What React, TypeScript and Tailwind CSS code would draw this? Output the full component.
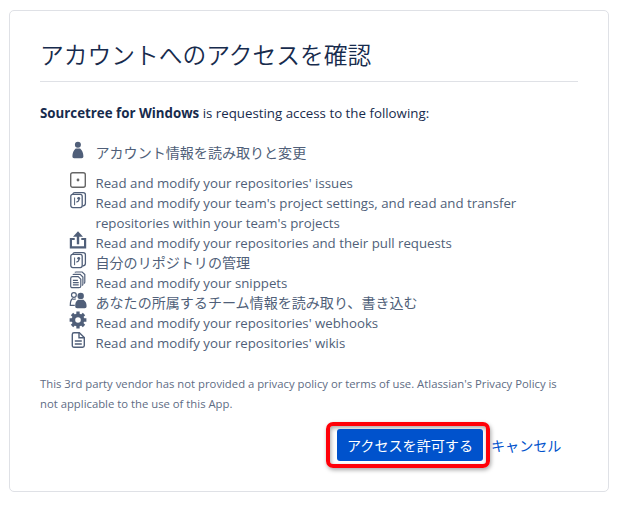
import { ReactNode } from "react";

const ICON = "block h-[18px] w-[18px] shrink-0 overflow-visible";

function UserIcon() {
  return (
    <svg className={ICON} viewBox="0 0 18 18" fill="#505f79">
      <circle cx="8.9" cy="3.7" r="3" />
      <path d="M6.7 7.5h4.4c2 1.7 3.300 4.500 3.300 7.800 0 1.300-.6 2-1.800 2H5.200c-1.200 0-1.800-.7-1.800-2 0-3.300 1.300-6.100 3.300-7.800z" />
    </svg>
  );
}

function IssueIcon() {
  return (
    <svg className={ICON} viewBox="0 0 18 18" fill="none" stroke="#666" strokeWidth="1.4">
      <rect x="1.7" y="1.7" width="14.6" height="14.6" rx="2" />
      <circle cx="9" cy="9" r="1.4" fill="#666" stroke="none" />
    </svg>
  );
}

function RepoIcon() {
  return (
    <svg className={ICON} viewBox="0 0 18 18" fill="none" stroke="#505f79" strokeWidth="1.3">
      <rect x="1.8" y="3.3" width="11.4" height="13.3" rx="2" />
      <path d="M3.8 3c.3-1 1-1.4 2-1.4h8.400c1.300 0 2.200.9 2.200 2.200v8.700c0 1.300-1 2.300-2.900 2.700" />
      <path d="M5.600 6.500v7.700" strokeWidth="1" />
      <path d="M10 7.500v1.300c0 1.500-1.200 2-2.600 2.400" />
      <circle cx="9.7" cy="7.3" r="1.4" fill="#505f79" stroke="none" />
    </svg>
  );
}

function ShareIcon() {
  return (
    <svg className={ICON} viewBox="0 0 18 18" fill="none" stroke="#505f79" strokeWidth="2.2">
      <path d="M5.700 8H1.900v8.400h14.200V8h-3.800" />
      <path d="M9 4v9.300" strokeWidth="2.4" />
      <path d="M9 .3l5 5.400H4z" fill="#505f79" stroke="none" />
    </svg>
  );
}

function SnippetIcon() {
  return (
    <svg className={ICON} viewBox="0 0 18 18" fill="none" stroke="#505f79" strokeWidth="1.2">
      <path d="M3.500 5.600h5.700l2.600 2.600v6.700c0 1.200-.6 1.800-1.800 1.800H3.500c-1.200 0-1.800-.6-1.800-1.800V7.400c0-1.200.6-1.800 1.800-1.800z" />
      <path d="M3.700 3.700c.3-.3.700-.4 1.300-.4h6.200l2.700 2.700v7c0 .8-.3 1.300-.8 1.500" />
      <path d="M5.800 1.400c.3-.3.700-.4 1.300-.4h6.100l2.600 2.600v7.300c0 .8-.3 1.300-.8 1.500" />
      <path d="M3.900 9.300h5M3.900 11.600h5.800M3.900 13.900h5.800" />
    </svg>
  );
}

function TeamIcon() {
  return (
    <svg className={ICON} viewBox="0 0 18 18" fill="#505f79">
      <g fill="none" stroke="#505f79" strokeWidth="1.2">
        <circle cx="4.9" cy="4" r="2.4" />
        <path d="M5.800 14.300H1.300c0-3 .3-5.200 2-6.500 1.100.6 2.100.6 3.400.1" />
      </g>
      <circle cx="11.7" cy="4.9" r="3.2" />
      <path d="M9 8.800h5.400c2.100 1.300 3.200 3.500 3.200 6.300 0 1.400-.7 2.200-1.900 2.200H8.100c-1.200 0-1.900-.8-1.900-2.200 0-2.800.7-5 2.800-6.300z" />
    </svg>
  );
}

function GearIcon() {
  return (
    <svg className={ICON} viewBox="0 0 18 18" fill="none" stroke="#505f79">
      <circle cx="9" cy="9" r="4.6" strokeWidth="3.6" />
      <path
        strokeWidth="3.3"
        d="M9 .6v3M9 14.400v3M.6 9h3M14.400 9h3M3 3l2 2M13 13l2 2M3 15l2-2M13 5l2-2"
      />
    </svg>
  );
}

function PageIcon() {
  return (
    <svg className={ICON} viewBox="0 0 18 18" fill="none" stroke="#505f79" strokeWidth="1.4">
      <path d="M5 1.700h5.300l5 4.800v8.100c0 1.100-.6 1.700-1.700 1.700H5c-1.100 0-1.700-.6-1.700-1.700V3.400c0-1.100.6-1.700 1.700-1.700z" />
      <path d="M10 1.700v5h5M5.800 10h7M5.800 13h7" />
    </svg>
  );
}

function Scope({ icon, children, japanese }: { icon: ReactNode; children: ReactNode; japanese?: boolean }) {
  return (
    <li className="flex gap-[8.500px]">
      <div className="-mt-[2px] h-[18px]">{icon}</div>
      <div className={japanese ? "text-[14.05px]" : "whitespace-nowrap"}>{children}</div>
    </li>
  );
}

export default function App() {
  return (
    <div className="h-[505px] w-[619px] bg-white pt-[10px] pl-[9px] font-['Open_Sans','Noto_Sans_CJK_JP',sans-serif] text-[13.25px] leading-5 text-[#172b4d]">
      <main className="h-[482px] w-[600px] rounded-[5px] border border-[#dfe1e6] px-[30px] pt-[29px]">
        <h1 className="h-[42px] border-b border-[#dfe1e6] text-[23.75px] leading-[30px] font-[350]">
          アカウントへのアクセスを確認
        </h1>
        <p className="mt-[21px] text-[13.3px] whitespace-nowrap">
          <strong className="font-bold">Sourcetree for Windows</strong> is requesting access to the following:
        </p>
        <ul className="mt-5 pl-[29px] text-[#505f79]">
          <Scope icon={<UserIcon />} japanese>アカウント情報を読み取りと変更</Scope>
          <li className="h-[10px]" />
          <Scope icon={<IssueIcon />}>Read and modify your repositories&apos; issues</Scope>
          <Scope icon={<RepoIcon />}>
            Read and modify your team&apos;s project settings, and read and transfer
            <br />
            repositories within your team&apos;s projects
          </Scope>
          <Scope icon={<ShareIcon />}>Read and modify your repositories and their pull requests</Scope>
          <Scope icon={<RepoIcon />} japanese>自分のリポジトリの管理</Scope>
          <Scope icon={<SnippetIcon />}>Read and modify your snippets</Scope>
          <Scope icon={<TeamIcon />} japanese>あなたの所属するチーム情報を読み取り、書き込む</Scope>
          <Scope icon={<GearIcon />}>Read and modify your repositories&apos; webhooks</Scope>
          <Scope icon={<PageIcon />}>Read and modify your repositories&apos; wikis</Scope>
        </ul>
        <p className="mt-[21px] text-[11.3px] whitespace-nowrap text-[#5e6c84]">
          This 3rd party vendor has not provided a privacy policy or terms of use. Atlassian&apos;s Privacy Policy is
          <br />
          not applicable to the use of this App.
        </p>
        <div className="mt-2 flex items-center pl-[286px] text-[14.1px]">
          <div className="rounded-[7px] border-4 border-[#ff0008] py-[3px] pr-[3px] pl-[7px] shadow-[1px_2px_4px_rgba(0,0,0,0.35),inset_1px_2px_4px_rgba(0,0,0,0.35)]">
            <button className="block h-8 w-[146px] rounded-[3px] bg-[#0052cc] pt-px text-white">アクセスを許可する</button>
          </div>
          <a href="#" className="pt-[2px] pl-px text-[#0052cc]">キャンセル</a>
        </div>
      </main>
    </div>
  );
}
